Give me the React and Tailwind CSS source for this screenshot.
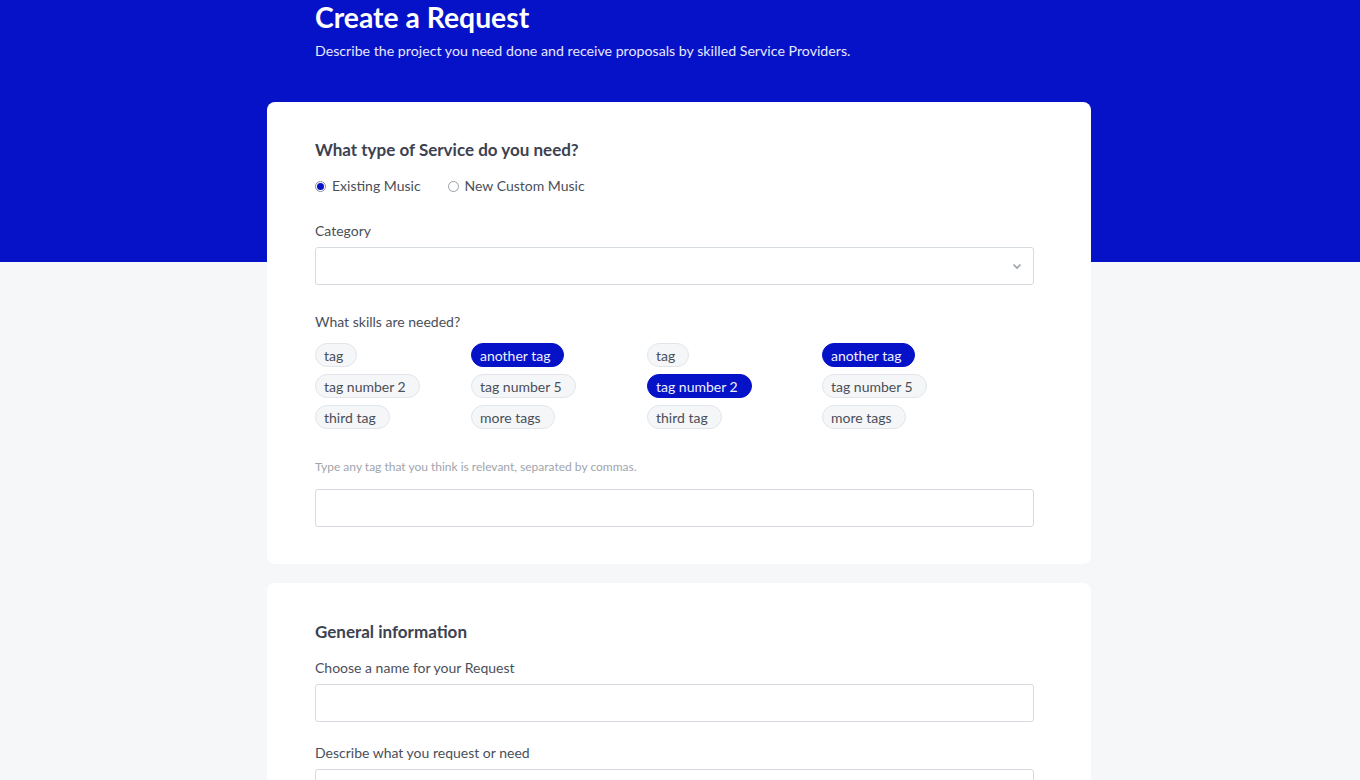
import React from 'react';

const BLUE = 'bg-[#0612c8]';

const tagCols = [
  { w: 'w-[156px]', tags: [['tag', false], ['tag number 2', false], ['third tag', false]] },
  { w: 'w-[176px]', tags: [['another tag', true], ['tag number 5', false], ['more tags', false]] },
  { w: 'w-[175px]', tags: [['tag', false], ['tag number 2', true], ['third tag', false]] },
  { w: 'w-[175px]', tags: [['another tag', true], ['tag number 5', false], ['more tags', false]] },
];

function Tag({ label, active }) {
  return (
    <span
      className={
        active
          ? 'inline-flex h-[24px] items-center rounded-full border border-[#0612c8] bg-[#0612c8] pl-[8px] pr-[13px] text-[14px] text-[#eef0ff]'
          : 'inline-flex h-[24px] items-center rounded-full border border-[#e2e6ea] bg-[#f4f6f8] pl-[8px] pr-[13px] text-[14px] text-[#4a4f5a]'
      }
    >
      {label}
    </span>
  );
}

function Radio({ checked, label }) {
  return (
    <label className="flex items-center gap-[6px] text-[14px] leading-[20px] text-[#4a4f5a]">
      <span
        className={
          checked
            ? 'flex h-[11px] w-[11px] items-center justify-center rounded-full border border-[#8a8f98] bg-white'
            : 'flex h-[11px] w-[11px] items-center justify-center rounded-full border border-[#9aa0a8] bg-white'
        }
      >
        {checked && <span className="h-[7px] w-[7px] rounded-full bg-[#0612c8]" />}
      </span>
      {label}
    </label>
  );
}

function Input() {
  return <div className="h-[38px] w-[719px] rounded-[3px] border border-[#d5dbe1] bg-white" />;
}

export default function App() {
  return (
    <div
      className="min-h-[780px] bg-[#f5f7f9]"
      style={{ fontFamily: 'Lato, "Open Sans", sans-serif' }}
    >
      <div className={`${BLUE} h-[262px]`}>
        <div className="ml-[267px] w-[824px] px-12">
          <h1 className="h-[34px] text-[28.3px] font-bold leading-[34px] text-white">Create a Request</h1>
          <p className="mt-[7px] text-[14.2px] leading-[20px] text-[#e6e8ff]">
            Describe the project you need done and receive proposals by skilled Service Providers.
          </p>
        </div>
      </div>

      <div className="ml-[267px] -mt-[160px] flex w-[824px] flex-col gap-[19px]">
        <div className="rounded-[8px] bg-white px-12 pt-[36px] pb-[37px]">
          <h2 className="text-[17px] font-bold leading-[24px] text-[#3c4250]">What type of Service do you need?</h2>
          <div className="mt-[14px] flex items-center gap-[27px]">
            <Radio checked label="Existing Music" />
            <Radio label="New Custom Music" />
          </div>

          <div className="mt-[25px] text-[14px] leading-[20px] text-[#4a4f5a]">Category</div>
          <div className="mt-[6px] flex h-[38px] w-[719px] items-center justify-end rounded-[3px] border border-[#d5dbe1] bg-white pr-[11px]">
            <svg width="10" height="10" viewBox="0 0 10 10" fill="none">
              <path d="M1.5 3.5 5 7l3.5-3.5" stroke="#9aa0a8" strokeWidth="1.6" />
            </svg>
          </div>

          <div className="mt-[27px] text-[14px] leading-[20px] text-[#4a4f5a]">What skills are needed?</div>
          <div className="mt-[11px] flex">
            {tagCols.map((col, i) => (
              <div key={i} className={`${col.w} flex flex-col items-start gap-[7px]`}>
                {col.tags.map(([t, a], j) => (
                  <Tag key={j} label={t} active={a} />
                ))}
              </div>
            ))}
          </div>

          <div className="mt-[30px] text-[12px] leading-[16px] text-[#a0a5ad]">
            Type any tag that you think is relevant, separated by commas.
          </div>
          <div className="mt-[14px]">
            <Input />
          </div>
        </div>

        <div className="rounded-[8px] bg-white px-12 pt-[37px] pb-[40px]">
          <h2 className="text-[17px] font-bold leading-[24px] text-[#3c4250]">General information</h2>
          <div className="mt-[14px] text-[14px] leading-[20px] text-[#4a4f5a]">Choose a name for your Request</div>
          <div className="mt-[6px]">
            <Input />
          </div>
          <div className="mt-[21px] text-[14px] leading-[20px] text-[#4a4f5a]">Describe what you request or need</div>
          <div className="mt-[6px]">
            <div className="h-[120px] w-[719px] rounded-[3px] border border-[#d5dbe1] bg-white" />
          </div>
        </div>
      </div>
    </div>
  );
}
